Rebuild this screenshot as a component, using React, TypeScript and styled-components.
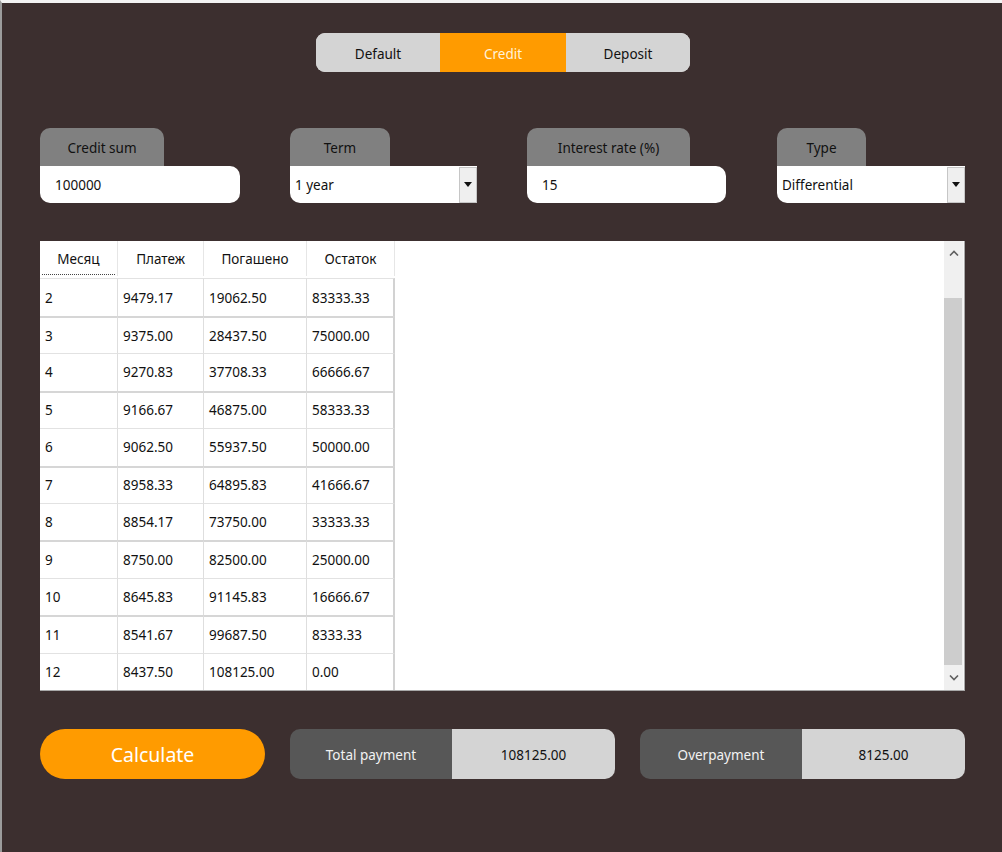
import React from "react";
import styled, { createGlobalStyle } from "styled-components";

const Global = createGlobalStyle`
  html, body { margin: 0; padding: 0; background: #3c2f2f; }
  body { font-family: "Noto Sans", "Open Sans", "Liberation Sans", sans-serif; }
  * { box-sizing: border-box; }
`;

const Window = styled.div`
  width: 1002px;
  height: 852px;
  background: #3c2f2f;
  border-top: 3px solid #f3f3f3;
  border-left: 2px solid #9c9c9c;
  display: flex;
  flex-direction: column;
  align-items: stretch;
  padding: 30px 0 0 38px;
`;

const TabBar = styled.div`
  align-self: center;
  margin-left: -36px;
  display: flex;
  width: 374px;
  height: 39px;
  border-radius: 9px;
  overflow: hidden;
  background: #d4d4d4;
`;

const Tab = styled.div<{ $active?: boolean; $w: number }>`
  width: ${(p) => p.$w}px;
  display: flex;
  align-items: center;
  justify-content: center;
  padding-top: 2px;
  font-size: 13.5px;
  color: ${(p) => (p.$active ? "#fff3dc" : "#111")};
  background: ${(p) => (p.$active ? "#ff9b00" : "#d4d4d4")};
`;

const Fields = styled.div`
  display: flex;
  margin-top: 56px;
`;

const Field = styled.div<{ $w: number; $gap: number }>`
  width: ${(p) => p.$w}px;
  margin-left: ${(p) => p.$gap}px;
  display: flex;
  flex-direction: column;
`;

const FieldLabel = styled.div<{ $w: number }>`
  width: ${(p) => p.$w}px;
  height: 38px;
  background: #808080;
  border-radius: 10px 10px 0 0;
  display: flex;
  align-items: center;
  justify-content: center;
  padding-top: 2px;
  font-size: 13.5px;
  color: #111;
`;

const TextBox = styled.div`
  height: 37px;
  background: #fff;
  border-radius: 0 10px 10px 10px;
  display: flex;
  align-items: center;
  padding-left: 15px;
  font-size: 13.5px;
  color: #111;
`;

const SelectBox = styled.div`
  height: 37px;
  background: #fff;
  border-radius: 0 0 0 10px;
  display: flex;
  align-items: center;
  justify-content: space-between;
  padding-left: 5px;
  font-size: 13.5px;
  color: #111;
`;

const DropButton = styled.div`
  width: 18px;
  height: 36px;
  background: #efefef;
  border: 1px solid #c6c6c6;
  display: flex;
  align-items: center;
  justify-content: center;
`;

const Grid = styled.div`
  margin-top: 38px;
  width: 925px;
  height: 450px;
  background: #fff;
  border-right: 1px solid #a8a8a8;
  border-bottom: 1px solid #a8a8a8;
  display: flex;
`;

const GridBody = styled.div`
  flex: 1;
  display: flex;
  flex-direction: column;
`;

const Row = styled.div`
  display: flex;
  height: 37.5px;
`;

const HeadCell = styled.div<{ $w: number; $focus?: boolean }>`
  width: ${(p) => p.$w}px;
  height: 35px;
  display: flex;
  align-items: center;
  justify-content: center;
  font-size: 13.5px;
  color: #111;
  border-right: 1px solid #e6e6e6;
  position: relative;
  &::after {
    content: "";
    display: ${(p) => (p.$focus ? "block" : "none")};
    position: absolute;
    left: 2px;
    right: 2px;
    bottom: 1px;
    border-bottom: 1px dotted #444;
  }
`;

const Cell = styled.div<{ $w: number; $topThick?: boolean; $last?: boolean }>`
  width: ${(p) => p.$w}px;
  display: flex;
  align-items: center;
  padding-left: 5px;
  font-size: 13.5px;
  color: #111;
  border-top: ${(p) => (p.$topThick ? "2px solid #d6d6d6" : "1px solid #e2e2e2")};
  border-right: ${(p) => (p.$last ? "2px solid #d2d2d2" : "1px solid #dedede")};
`;

const ScrollBar = styled.div`
  width: 20px;
  background: #f0f0f0;
  display: flex;
  flex-direction: column;
  border-right: 1px solid #f7f7f7;
`;

const ScrollTrack = styled.div<{ $h: number; $top?: boolean }>`
  height: ${(p) => p.$h}px;
  display: flex;
  align-items: ${(p) => (p.$top ? "flex-start" : "center")};
  padding-top: ${(p) => (p.$top ? "9px" : "0")};
  justify-content: center;
`;

const Thumb = styled.div`
  flex: 1;
  background: #cdcdcd;
  margin: 0 1px 0 0;
`;

const Bottom = styled.div`
  display: flex;
  gap: 25px;
  margin-top: 38px;
`;

const CalcButton = styled.div`
  width: 225px;
  height: 50px;
  border-radius: 25px;
  background: #ff9b00;
  color: #fff;
  font-size: 19.5px;
  display: flex;
  align-items: center;
  justify-content: center;
`;

const Result = styled.div`
  width: 325px;
  height: 50px;
  border-radius: 10px;
  overflow: hidden;
  display: flex;
`;

const ResultLabel = styled.div`
  width: 162px;
  background: #575757;
  color: #f2f2f2;
  font-size: 13.5px;
  display: flex;
  align-items: center;
  justify-content: center;
  padding-top: 2px;
`;

const ResultValue = styled.div`
  flex: 1;
  background: #d4d4d4;
  color: #111;
  font-size: 13.5px;
  display: flex;
  align-items: center;
  justify-content: center;
  padding-top: 2px;
`;

const Arrow = () => (
  <svg width="8" height="5" viewBox="0 0 8 5">
    <path d="M0 0 L8 0 L4 5 Z" fill="#111" />
  </svg>
);

const Chevron = ({ up }: { up?: boolean }) => (
  <svg width="10" height="6" viewBox="0 0 10 6">
    <path
      d={up ? "M1 5.5 L5 1.5 L9 5.5" : "M1 0.5 L5 4.5 L9 0.5"}
      stroke="#606060"
      strokeWidth="1.6"
      fill="none"
    />
  </svg>
);

const cols = [78, 86, 103, 88];
const headers = ["Месяц", "Платеж", "Погашено", "Остаток"];
const rows = [
  ["2", "9479.17", "19062.50", "83333.33"],
  ["3", "9375.00", "28437.50", "75000.00"],
  ["4", "9270.83", "37708.33", "66666.67"],
  ["5", "9166.67", "46875.00", "58333.33"],
  ["6", "9062.50", "55937.50", "50000.00"],
  ["7", "8958.33", "64895.83", "41666.67"],
  ["8", "8854.17", "73750.00", "33333.33"],
  ["9", "8750.00", "82500.00", "25000.00"],
  ["10", "8645.83", "91145.83", "16666.67"],
  ["11", "8541.67", "99687.50", "8333.33"],
  ["12", "8437.50", "108125.00", "0.00"],
];

export default function App() {
  return (
    <>
      <Global />
      <Window>
        <TabBar>
          <Tab $w={124}>Default</Tab>
          <Tab $w={126} $active>
            Credit
          </Tab>
          <Tab $w={124}>Deposit</Tab>
        </TabBar>

        <Fields>
          <Field $w={200} $gap={0}>
            <FieldLabel $w={124}>Credit sum</FieldLabel>
            <TextBox>100000</TextBox>
          </Field>
          <Field $w={187} $gap={50}>
            <FieldLabel $w={100}>Term</FieldLabel>
            <SelectBox>
              1 year
              <DropButton>
                <Arrow />
              </DropButton>
            </SelectBox>
          </Field>
          <Field $w={199} $gap={50}>
            <FieldLabel $w={163}>Interest rate (%)</FieldLabel>
            <TextBox>15</TextBox>
          </Field>
          <Field $w={188} $gap={51}>
            <FieldLabel $w={89}>Type</FieldLabel>
            <SelectBox>
              Differential
              <DropButton>
                <Arrow />
              </DropButton>
            </SelectBox>
          </Field>
        </Fields>

        <Grid>
          <GridBody>
            <Row>
              {headers.map((h, i) => (
                <HeadCell key={h} $w={cols[i]} $focus={i === 0}>
                  {h}
                </HeadCell>
              ))}
            </Row>
            {rows.map((r, ri) => (
              <Row key={r[0]}>
                {r.map((c, ci) => (
                  <Cell
                    key={ci}
                    $w={cols[ci]}
                    $topThick={ri % 2 === 1}
                    $last={ci === 3}
                  >
                    {c}
                  </Cell>
                ))}
              </Row>
            ))}
          </GridBody>
          <ScrollBar>
            <ScrollTrack $h={57} $top>
              <Chevron up />
            </ScrollTrack>
            <Thumb />
            <ScrollTrack $h={25}>
              <Chevron />
            </ScrollTrack>
          </ScrollBar>
        </Grid>

        <Bottom>
          <CalcButton>Calculate</CalcButton>
          <Result>
            <ResultLabel>Total payment</ResultLabel>
            <ResultValue>108125.00</ResultValue>
          </Result>
          <Result>
            <ResultLabel>Overpayment</ResultLabel>
            <ResultValue>8125.00</ResultValue>
          </Result>
        </Bottom>
      </Window>
    </>
  );
}
